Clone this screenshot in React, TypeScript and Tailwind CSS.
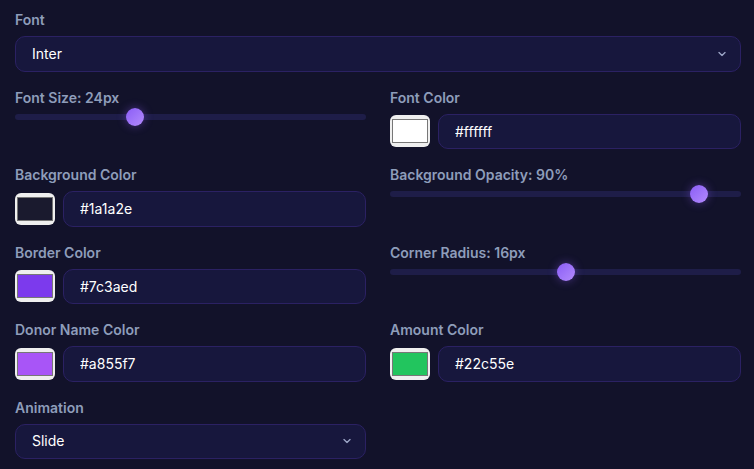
import { useState } from 'react'

const labelCls = 'mb-1.5 block text-sm leading-5 font-semibold text-[#8e9dba]'
const fieldCls =
  'h-[35.5px] w-full rounded-[10px] border border-[#2b2163] bg-[#17173d] px-4 text-sm text-white outline-none'
const rangeCls =
  'block h-1.5 w-full cursor-pointer appearance-none rounded-full bg-[#1e1d48] outline-none [&::-webkit-slider-thumb]:h-[18px] [&::-webkit-slider-thumb]:w-[18px] [&::-webkit-slider-thumb]:appearance-none [&::-webkit-slider-thumb]:rounded-full [&::-webkit-slider-thumb]:bg-gradient-to-br [&::-webkit-slider-thumb]:from-[#8b5cf6] [&::-webkit-slider-thumb]:to-[#b38afc] [&::-webkit-slider-thumb]:shadow-[0_0_10px_rgba(139,92,246,0.45)]'

function ColorField({ label, value, onChange }: { label: string; value: string; onChange: (v: string) => void }) {
  return (
    <div>
      <label className={labelCls}>{label}</label>
      <div className="flex items-center gap-2">
        <input
          type="color"
          value={value}
          onChange={(e) => onChange(e.target.value)}
          className="h-8 w-10 shrink-0 cursor-pointer rounded-md bg-[#efefef]"
        />
        <input type="text" value={value} onChange={(e) => onChange(e.target.value)} className={fieldCls} />
      </div>
    </div>
  )
}

function SliderField({
  label,
  value,
  min,
  max,
  onChange,
}: {
  label: string
  value: number
  min: number
  max: number
  onChange: (v: number) => void
}) {
  return (
    <div>
      <label className={labelCls}>{label}</label>
      <input
        type="range"
        min={min}
        max={max}
        value={value}
        onChange={(e) => onChange(Number(e.target.value))}
        className={rangeCls}
      />
    </div>
  )
}

function SelectField({
  label,
  value,
  options,
  onChange,
}: {
  label: string
  value: string
  options: { value: string; label: string }[]
  onChange: (v: string) => void
}) {
  return (
    <div>
      <label className={labelCls}>{label}</label>
      <div className="relative">
        <select value={value} onChange={(e) => onChange(e.target.value)} className={`${fieldCls} appearance-none`}>
          {options.map((o) => (
            <option key={o.value} value={o.value}>
              {o.label}
            </option>
          ))}
        </select>
        <svg
          className="pointer-events-none absolute top-1/2 right-[15px] h-[5px] w-2 -translate-y-1/2 text-[#9aa3c4]"
          viewBox="0 0 8 5"
          fill="none"
          stroke="currentColor"
          strokeWidth={1.4}
          strokeLinecap="round"
          strokeLinejoin="round"
        >
          <path d="M1 1l3 3 3-3" />
        </svg>
      </div>
    </div>
  )
}

export default function App() {
  const [font, setFont] = useState('Inter')
  const [fontSize, setFontSize] = useState(24)
  const [fontColor, setFontColor] = useState('#ffffff')
  const [bgColor, setBgColor] = useState('#1a1a2e')
  const [bgOpacity, setBgOpacity] = useState(90)
  const [borderColor, setBorderColor] = useState('#7c3aed')
  const [radius, setRadius] = useState(16)
  const [nameColor, setNameColor] = useState('#a855f7')
  const [amountColor, setAmountColor] = useState('#22c55e')
  const [animation, setAnimation] = useState('slide')

  return (
    <div className="min-h-screen bg-[#12122a] pt-[10px] pr-[13px] pb-3 pl-[15px] [font-family:Inter,'Noto_Sans',sans-serif]">
      <div className="grid grid-cols-2 gap-x-6 gap-y-4">
        <div className="col-span-2">
          <SelectField
            label="Font"
            value={font}
            onChange={setFont}
            options={[
              { value: 'Inter', label: 'Inter' },
              { value: 'Roboto', label: 'Roboto' },
              { value: 'Lato', label: 'Lato' },
              { value: 'Open Sans', label: 'Open Sans' },
            ]}
          />
        </div>

        <SliderField label={`Font Size: ${fontSize}px`} value={fontSize} min={12} max={48} onChange={setFontSize} />
        <ColorField label="Font Color" value={fontColor} onChange={setFontColor} />

        <ColorField label="Background Color" value={bgColor} onChange={setBgColor} />
        <SliderField label={`Background Opacity: ${bgOpacity}%`} value={bgOpacity} min={0} max={100} onChange={setBgOpacity} />

        <ColorField label="Border Color" value={borderColor} onChange={setBorderColor} />
        <SliderField label={`Corner Radius: ${radius}px`} value={radius} min={0} max={32} onChange={setRadius} />

        <ColorField label="Donor Name Color" value={nameColor} onChange={setNameColor} />
        <ColorField label="Amount Color" value={amountColor} onChange={setAmountColor} />

        <SelectField
          label="Animation"
          value={animation}
          onChange={setAnimation}
          options={[
            { value: 'slide', label: 'Slide' },
            { value: 'fade', label: 'Fade' },
            { value: 'bounce', label: 'Bounce' },
          ]}
        />
      </div>
    </div>
  )
}
